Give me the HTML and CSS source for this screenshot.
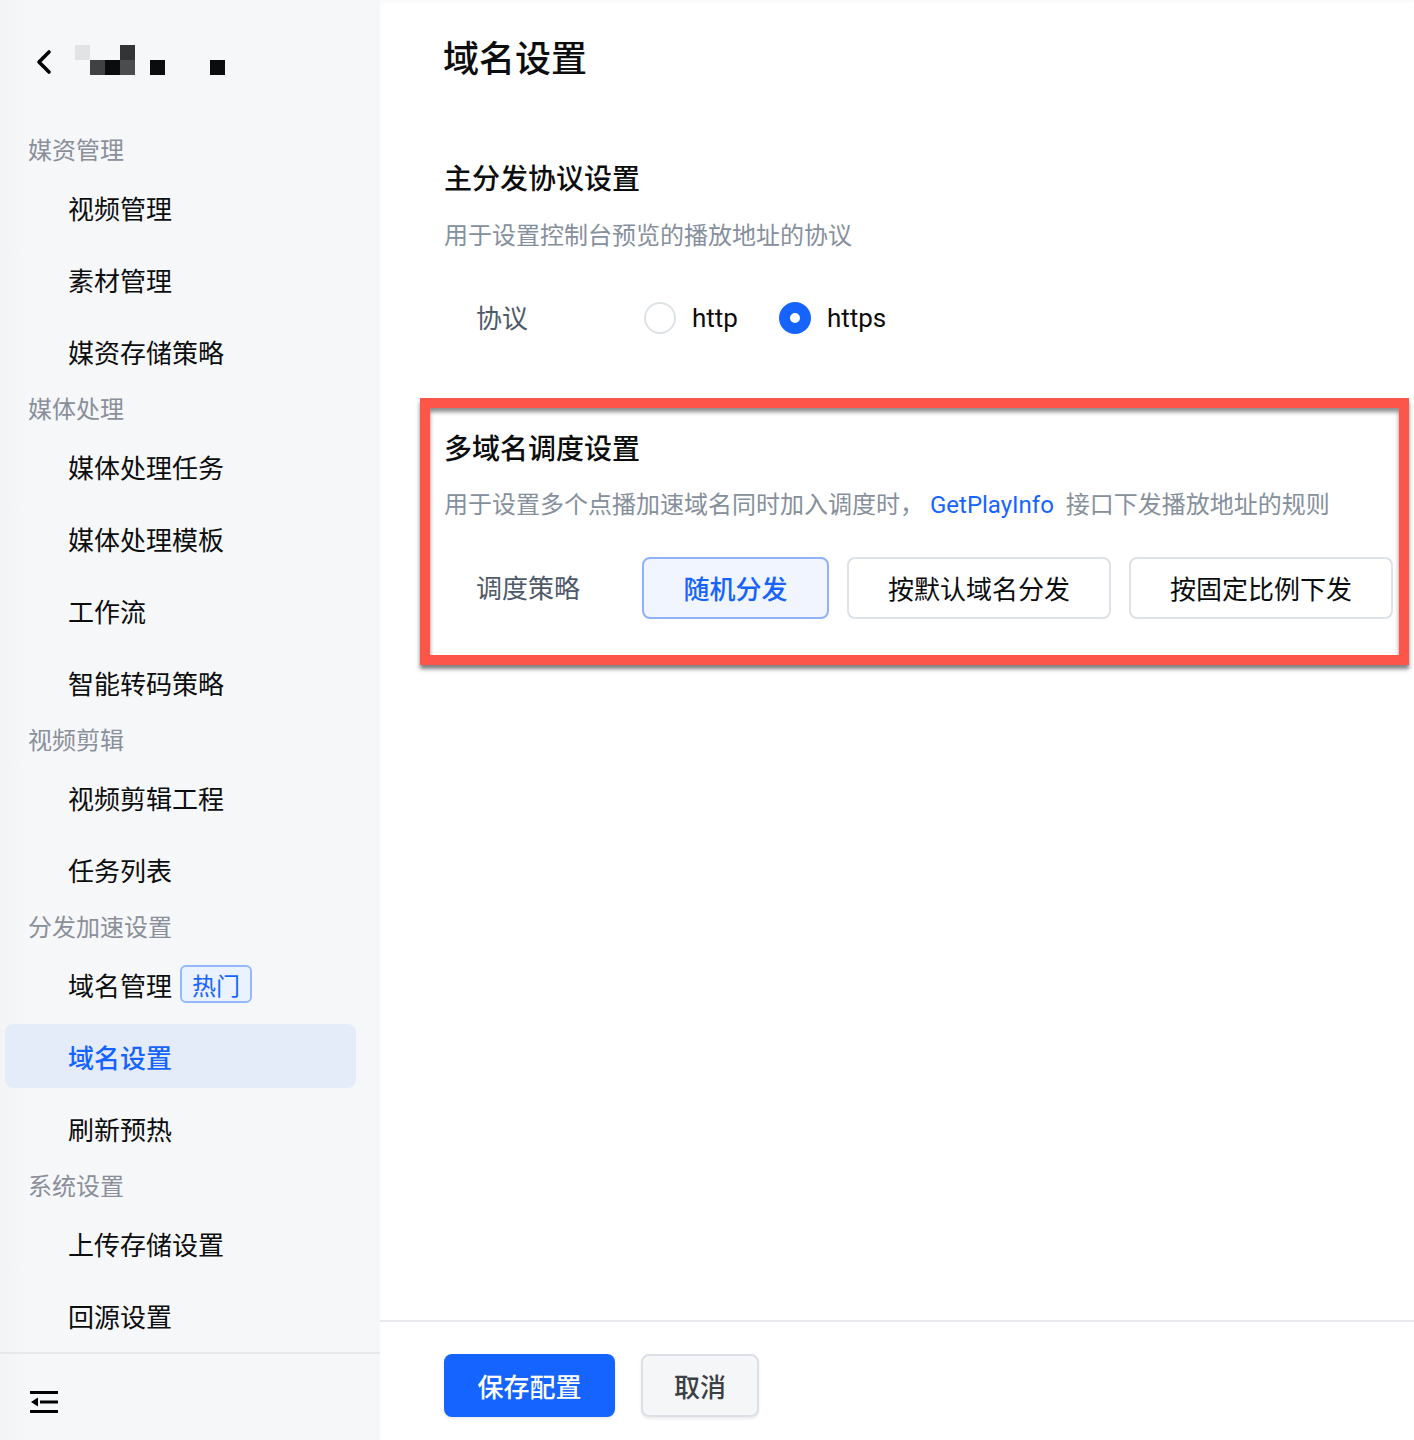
FILE: index.html
```html
<!DOCTYPE html>
<html lang="zh-CN">
<head>
    <meta charset="UTF-8">
    <meta name="viewport" content="width=device-width, initial-scale=1.0">
    <title>域名设置</title>
    <link rel="stylesheet" href="styles.css">
</head>
<body>
    <div class="sidebar">
        <div class="side-header">
            <svg class="back" width="20" height="26" viewBox="0 0 20 26">
                <path d="M15 3 L5 13 L15 23" fill="none" stroke="#000" stroke-width="3.6" stroke-linecap="round" stroke-linejoin="round"/>
            </svg>
            <svg class="mosaic" width="150" height="30" viewBox="0 0 150 30">
                <rect x="0" y="0" width="15" height="15" fill="#e2e3e5"/>
                <rect x="45" y="0" width="15" height="15" fill="#333435"/>
                <rect x="15" y="15" width="15" height="15" fill="#404142"/>
                <rect x="30" y="15" width="15" height="15" fill="#0b0c0e"/>
                <rect x="45" y="15" width="15" height="15" fill="#4b4c4d"/>
                <rect x="75" y="15" width="15" height="15" fill="#0b0c0e"/>
                <rect x="135" y="15" width="15" height="15" fill="#0b0c0e"/>
            </svg>
        </div>

        <div class="nav">
            <div class="nav-group">媒资管理</div>
            <div class="nav-item">视频管理</div>
            <div class="nav-item">素材管理</div>
            <div class="nav-item">媒资存储策略</div>

            <div class="nav-group">媒体处理</div>
            <div class="nav-item">媒体处理任务</div>
            <div class="nav-item">媒体处理模板</div>
            <div class="nav-item">工作流</div>
            <div class="nav-item">智能转码策略</div>

            <div class="nav-group">视频剪辑</div>
            <div class="nav-item">视频剪辑工程</div>
            <div class="nav-item">任务列表</div>

            <div class="nav-group">分发加速设置</div>
            <div class="nav-item">域名管理 <span class="tag">热门</span></div>
            <div class="nav-item active">域名设置</div>
            <div class="nav-item">刷新预热</div>

            <div class="nav-group">系统设置</div>
            <div class="nav-item">上传存储设置</div>
            <div class="nav-item">回源设置</div>
        </div>

        <div class="side-footer">
            <svg width="28" height="22" viewBox="0 0 28 22">
                <rect x="0" y="0" width="28" height="3" fill="#000"/>
                <rect x="10" y="9.5" width="18" height="3" fill="#000"/>
                <rect x="0" y="19" width="28" height="3" fill="#000"/>
                <path d="M1 11 L8 6.5 L8 15.5 Z" fill="#000"/>
            </svg>
        </div>
    </div>

    <div class="main">
        <div class="content">
            <h1 class="page-title">域名设置</h1>

            <div class="section">
                <h2 class="section-title">主分发协议设置</h2>
                <p class="section-desc">用于设置控制台预览的播放地址的协议</p>
                <div class="form-row">
                    <span class="form-label">协议</span>
                    <label class="radio"><span class="radio-dot"></span>http</label>
                    <label class="radio checked"><span class="radio-dot"></span>https</label>
                </div>
            </div>

            <!-- 标注框 -->
            <div class="section highlight">
                <h2 class="section-title">多域名调度设置</h2>
                <p class="section-desc">用于设置多个点播加速域名同时加入调度时， <span class="link">GetPlayInfo</span> 接口下发播放地址的规则</p>
                <div class="form-row">
                    <span class="form-label">调度策略</span>
                    <div class="options">
                        <button class="option selected">随机分发</button>
                        <button class="option wide">按默认域名分发</button>
                        <button class="option wide">按固定比例下发</button>
                    </div>
                </div>
            </div>
        </div>

        <div class="footer">
            <button class="btn btn-primary">保存配置</button>
            <button class="btn btn-default">取消</button>
        </div>
    </div>
</body>
</html>
```

FILE: styles.css
```css
* {
    box-sizing: border-box;
}

body {
    margin: 0;
    padding: 0;
    height: 1440px;
    display: flex;
    font-family: Roboto, "Noto Sans CJK SC", sans-serif;
    color: #0c0d0e;
    background: #ffffff;
    overflow: hidden;
}

/* 侧边栏 */
.sidebar {
    width: 380px;
    flex-shrink: 0;
    height: 100%;
    background: linear-gradient(90deg, #f3f4f6 0, #f6f7f9 28px, #f6f7f9 100%);
    display: flex;
    flex-direction: column;
}

.side-header {
    height: 128px;
    display: flex;
    align-items: center;
    padding-left: 34px;
}

.side-header .back {
    margin-top: -4px;
}

.side-header .mosaic {
    margin-left: 21px;
    margin-top: -8px;
}

.nav {
    flex: 1;
    display: flex;
    flex-direction: column;
}

.nav-group {
    height: 43px;
    line-height: 40px;
    padding-top: 3px;
    padding-left: 28px;
    font-size: 24px;
    color: #8a8f99;
}

.nav-item {
    height: 64px;
    margin: 4px 24px 4px 5px;
    padding-left: 63px;
    display: flex;
    align-items: center;
    font-size: 26px;
    color: #0c0d0e;
    border-radius: 8px;
}

.nav-item.active {
    background: #e4ecfa;
    color: #1664ff;
    font-weight: 500;
}

.tag {
    margin-left: 8px;
    height: 38px;
    padding: 0 10px;
    display: inline-flex;
    align-items: center;
    font-size: 24px;
    color: #1664ff;
    background: #eaf1ff;
    border: 2px solid #94b8fb;
    border-radius: 6px;
}

.side-footer {
    height: 88px;
    border-top: 2px solid #e6e8eb;
    display: flex;
    align-items: center;
    padding-left: 30px;
    padding-top: 10px;
}

/* 主区域 */
.main {
    flex: 1;
    display: flex;
    flex-direction: column;
    box-shadow: inset 0 4px 4px -2px rgba(0, 0, 0, 0.03);
}

.content {
    flex: 1;
    padding: 36px 0 0 64px;
}

.page-title {
    margin: 0 0 0 -1px;
    font-size: 36px;
    line-height: 48px;
    font-weight: 500;
}

.section {
    margin-top: 76px;
}

.section-title {
    margin: 0;
    font-size: 28px;
    line-height: 40px;
    font-weight: 500;
}

.section-desc {
    margin: 18px 0 0;
    font-size: 24px;
    line-height: 36px;
    color: #86909c;
}

.link {
    color: #1664ff;
    margin-right: 6px;
}

.form-row {
    margin-top: 33px;
    height: 62px;
    display: flex;
    align-items: center;
    padding-left: 34px;
}

.form-label {
    width: 166px;
    margin-left: -2px;
    margin-top: -3px;
    font-size: 26px;
    color: #4e5969;
}

.radio {
    display: flex;
    align-items: center;
    font-size: 26px;
    color: #0c0d0e;
    margin-right: 39px;
}

.radio-dot {
    width: 32px;
    height: 32px;
    border-radius: 50%;
    border: 2px solid #dde2e9;
    background: #fff;
    margin-right: 16px;
    margin-left: 2px;
}

.radio.checked .radio-dot {
    border: 11px solid #1664ff;
}

.radio.checked {
    margin-right: 0;
}

/* 红色标注框 */
.highlight {
    margin: 49px 5px 0 -24px;
    border: 10px solid #fd5549;
    padding: 22px 0 36px 14px;
    box-shadow: inset 0 4px 4px rgba(0, 0, 0, 0.45), 0 4px 4px rgba(0, 0, 0, 0.5);
}

.highlight .section-desc {
    margin-top: 17px;
}

.highlight .form-row {
    margin-top: 34px;
}

.options {
    display: flex;
    gap: 18px;
}

.option {
    height: 62px;
    width: 264px;
    font-family: inherit;
    font-size: 26px;
    color: #0c0d0e;
    background: #fff;
    border: 2px solid #dde2e9;
    border-radius: 8px;
    padding-bottom: 3px;
}

.option.selected {
    width: 187px;
    color: #1664ff;
    background: #f0f5ff;
    border-color: #8fb3fa;
    font-weight: 500;
}

/* 底部按钮 */
.footer {
    height: 120px;
    border-top: 2px solid #e8e9ed;
    padding: 32px 0 0 64px;
    display: flex;
    gap: 26px;
    align-items: flex-start;
}

.btn {
    height: 63px;
    font-family: inherit;
    font-size: 26px;
    border-radius: 8px;
    cursor: pointer;
    box-shadow: 0 2px 3px rgba(0, 0, 0, 0.08);
    padding-bottom: 2px;
}

.btn-primary {
    width: 171px;
    color: #fff;
    background: #1664ff;
    border: none;
    font-weight: 500;
}

.btn-default {
    width: 118px;
    color: #3c3f44;
    background: #f5f6f8;
    border: 2px solid #dcdfe5;
    font-weight: 500;
}
```
